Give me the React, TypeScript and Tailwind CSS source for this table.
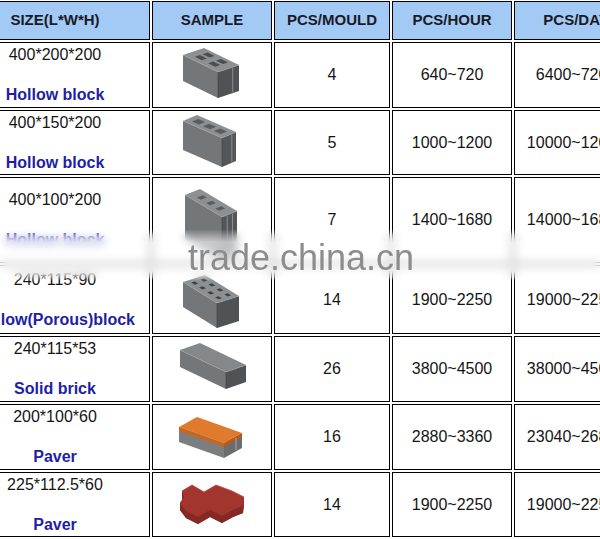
import React from "react";

type P = [number, number];
const pts = (arr: P[]) => arr.map((p) => `${p[0]},${p[1]}`).join(" ");

function faceMap(L: P, B: P, F: P) {
  return (u: number, v: number): P => [
    L[0] + u * (F[0] - L[0]) + v * (B[0] - L[0]),
    L[1] + u * (F[1] - L[1]) + v * (B[1] - L[1]),
  ];
}

function Box({
  L,
  B,
  F,
  h,
  top,
  front,
  side,
}: {
  L: P;
  B: P;
  F: P;
  h: number;
  top: string;
  front: string;
  side: string;
}) {
  const R: P = [B[0] + F[0] - L[0], B[1] + F[1] - L[1]];
  const d = (p: P): P => [p[0], p[1] + h];
  return (
    <g>
      <polygon points={pts([L, F, d(F), d(L)])} fill={front} />
      <polygon points={pts([F, R, d(R), d(F)])} fill={side} />
      <polygon points={pts([L, B, R, F])} fill={top} />
      <polyline points={pts([L, F, R])} fill="none" stroke="#9a9da0" strokeWidth={0.6} />
      <line x1={F[0]} y1={F[1]} x2={F[0]} y2={F[1] + h} stroke="#3e4043" strokeWidth={0.6} />
    </g>
  );
}

function Holes({
  L,
  B,
  F,
  spots,
  du,
  dv,
  fill = "#4b4e51",
}: {
  L: P;
  B: P;
  F: P;
  spots: [number, number][];
  du: number;
  dv: number;
  fill?: string;
}) {
  const m = faceMap(L, B, F);
  return (
    <g>
      {spots.map(([u, v], i) => (
        <polygon
          key={i}
          points={pts([m(u - du, v - dv), m(u + du, v - dv), m(u + du, v + dv), m(u - du, v + dv)])}
          fill={fill}
        />
      ))}
    </g>
  );
}

function Groove({ F, B, L, h, t, color = "#8c8f92" }: { F: P; B: P; L: P; h: number; t: number; color?: string }) {
  const R: P = [B[0] + F[0] - L[0], B[1] + F[1] - L[1]];
  const x = F[0] + t * (R[0] - F[0]);
  const y = F[1] + t * (R[1] - F[1]);
  return <line x1={x} y1={y + 1} x2={x} y2={y + h - 1} stroke={color} strokeWidth={1} />;
}

function Sample({ i }: { i: number }) {
  if (i === 0) {
    const L: P = [183, 55], B: P = [204, 48], F: P = [218, 72];
    return (
      <g>
        <Box L={L} B={B} F={F} h={26} top="#8d9093" front="#74777a" side="#505356" />
        <Holes L={L} B={B} F={F} spots={[[0.3, 0.35], [0.68, 0.35], [0.3, 0.72], [0.68, 0.72]]} du={0.1} dv={0.12} />
        <Groove L={L} B={B} F={F} h={26} t={0.7} />
      </g>
    );
  }
  if (i === 1) {
    const L: P = [183, 121], B: P = [197, 115], F: P = [222, 138];
    return (
      <g>
        <Box L={L} B={B} F={F} h={29} top="#8d9093" front="#74777a" side="#54575a" />
        <Holes L={L} B={B} F={F} spots={[[0.22, 0.5], [0.5, 0.5], [0.78, 0.5]]} du={0.09} dv={0.22} fill="#5a5d60" />
        <Groove L={L} B={B} F={F} h={29} t={0.7} />
      </g>
    );
  }
  if (i === 2) {
    const L: P = [185, 195], B: P = [200, 189], F: P = [222, 217];
    return (
      <g>
        <Box L={L} B={B} F={F} h={44} top="#8d9093" front="#74777a" side="#54575a" />
        <Holes L={L} B={B} F={F} spots={[[0.25, 0.5], [0.5, 0.5], [0.75, 0.5]]} du={0.05} dv={0.2} fill="#5a5d60" />
        <Groove L={L} B={B} F={F} h={44} t={0.35} />
        <Groove L={L} B={B} F={F} h={44} t={0.7} />
      </g>
    );
  }
  if (i === 3) {
    const L: P = [183, 282], B: P = [205, 275], F: P = [217, 303];
    return (
      <g>
        <Box L={L} B={B} F={F} h={25} top="#8d9093" front="#74777a" side="#505356" />
        <Holes
          L={L}
          B={B}
          F={F}
          spots={[
            [0.15, 0.3], [0.38, 0.3], [0.62, 0.3], [0.85, 0.3],
            [0.15, 0.72], [0.38, 0.72], [0.62, 0.72], [0.85, 0.72],
          ]}
          du={0.05}
          dv={0.08}
          fill="#3f4245"
        />
      </g>
    );
  }
  if (i === 4) {
    const L: P = [180, 350], B: P = [200, 343], F: P = [226, 372];
    return <Box L={L} B={B} F={F} h={17} top="#85888b" front="#74777a" side="#505356" />;
  }
  if (i === 5) {
    const L: P = [179, 427], B: P = [197, 417], F: P = [224, 443];
    const R: P = [B[0] + F[0] - L[0], B[1] + F[1] - L[1]];
    const d = (p: P, k: number): P => [p[0], p[1] + k];
    return (
      <g>
        <polygon points={pts([L, F, d(F, 15), d(L, 15)])} fill="#7b7e81" />
        <polygon points={pts([F, R, d(R, 15), d(F, 15)])} fill="#6a6d70" />
        <polygon points={pts([L, F, d(F, 4), d(L, 4)])} fill="#c8661f" />
        <polygon points={pts([F, R, d(R, 4), d(F, 4)])} fill="#b55a1b" />
        <polygon points={pts([L, B, R, F])} fill="#e07a2c" />
        <line x1={R[0] - 6} y1={R[1] + 5} x2={R[0] - 6} y2={R[1] + 17} stroke="#a5a8ab" strokeWidth={1} />
      </g>
    );
  }
  const top: P[] = [
    [182, 491], [192, 485], [204, 492], [216, 485], [232, 491], [244, 497],
    [243, 506], [233, 510], [222, 516], [210, 510], [198, 517], [186, 511], [180, 503], [184, 497],
  ];
  const low = top.map((p) => [p[0], p[1] + 7] as P);
  return (
    <g>
      <polygon points={pts(low)} fill="#7a2320" />
      {top.map((p, k) => {
        const q = top[(k + 1) % top.length];
        const p2: P = [p[0], p[1] + 7];
        const q2: P = [q[0], q[1] + 7];
        return <polygon key={k} points={pts([p, q, q2, p2])} fill="#862824" />;
      })}
      <polygon points={pts(top)} fill="#a2362f" />
      <polyline points={pts(top.slice(0, 6))} fill="none" stroke="#c25c55" strokeWidth={0.8} />
    </g>
  );
}

const rows = [
  { size: "400*200*200", name: "Hollow block", mould: "4", hour: "640~720", day: "6400~7200", top: 42, h: 66 },
  { size: "400*150*200", name: "Hollow block", mould: "5", hour: "1000~1200", day: "10000~12000", top: 110, h: 65 },
  { size: "400*100*200", name: "Hollow block", mould: "7", hour: "1400~1680", day: "14000~16800", top: 177, h: 86 },
  { size: "240*115*90", name: "Hollow(Porous)block", mould: "14", hour: "1900~2250", day: "19000~22500", top: 265, h: 69 },
  { size: "240*115*53", name: "Solid brick", mould: "26", hour: "3800~4500", day: "38000~45000", top: 336, h: 66 },
  { size: "200*100*60", name: "Paver", mould: "16", hour: "2880~3360", day: "23040~26880", top: 404, h: 66 },
  { size: "225*112.5*60", name: "Paver", mould: "14", hour: "1900~2250", day: "19000~22500", top: 472, h: 65 },
];

const headers = ["SIZE(L*W*H)", "SAMPLE", "PCS/MOULD", "PCS/HOUR", "PCS/DAY"];

export default function App() {
  return (
    <div className="relative w-[600px] h-[539px] overflow-hidden bg-white font-['Liberation_Sans',Arial,sans-serif]">
      <div className="ml-[-40px] mt-[1px] grid w-max grid-cols-[190px_120px_116px_120px_124px] grid-rows-[39px_66px_65px_86px_69px_66px_66px_65px] gap-[2px]">
        {headers.map((t) => (
          <div
            key={t}
            className="flex items-center justify-center border border-black bg-[#a2caf5] text-[15px] font-bold text-[#1a1a28] whitespace-nowrap"
          >
            {t}
          </div>
        ))}
        {rows.map((r, i) => (
          <React.Fragment key={i}>
            <div className="flex flex-col items-center justify-center border border-black bg-white text-[16px] leading-[20px] whitespace-nowrap">
              <span className="text-[#151515]">{r.size}</span>
              <span className="h-[20px]" />
              <span className="font-bold text-[#1e1ea6]">{r.name}</span>
            </div>
            <div className="overflow-hidden border border-black bg-white">
              <svg className="block" width={118} height={r.h - 2} viewBox={`153 ${r.top + 1} 118 ${r.h - 2}`}>
                <Sample i={i} />
              </svg>
            </div>
            <div className="flex items-center justify-center border border-black bg-white text-[16px] text-[#151515]">
              {r.mould}
            </div>
            <div className="flex items-center justify-center border border-black bg-white text-[16px] text-[#151515]">
              {r.hour}
            </div>
            <div className="flex items-center justify-center border border-black bg-white text-[16px] text-[#151515] whitespace-nowrap">
              {r.day}
            </div>
          </React.Fragment>
        ))}
      </div>
      <div className="pointer-events-none absolute left-0 top-[229px] h-[52px] w-[600px] bg-white/60 backdrop-blur-[5px] [mask-image:linear-gradient(to_bottom,transparent,black_25%,black_80%,transparent)]" />
      <div className="pointer-events-none absolute left-[188px] top-[240px] text-[36px] leading-[36px] text-[#8c8c8c] whitespace-nowrap">
        trade.china.cn
      </div>
    </div>
  );
}
